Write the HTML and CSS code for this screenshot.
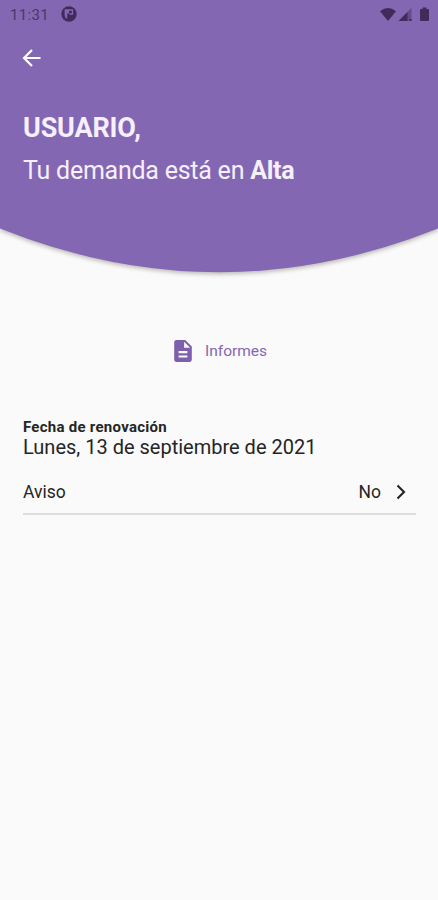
FILE: index.html
```html
<!DOCTYPE html>
<html lang="es">
<head>
<meta charset="utf-8">
<title>Demanda</title>
<link rel="stylesheet" href="styles.css">
</head>
<body>
<header class="hero">
  <svg class="hero-shape" viewBox="0 0 438 282" aria-hidden="true"><path d="M-20-20H458V220L438 228.5Q219 316 0 228.5L-20 220Z" fill="#8467b2"/></svg>
  <div class="status">
    <span class="clock">11:31</span>
    <svg class="app-mark" viewBox="0 0 16 16"><circle cx="8" cy="8" r="7.7" fill="#402b5b"/><path d="M3.600 3.300H8V7.500H6.200V12.500H4.800Q3.600 10 3.600 8Z" fill="#8467b2"/><path d="M8 4H11.500V8H8.500" fill="none" stroke="#8467b2" stroke-width="1.300"/></svg>
    <svg class="signals" viewBox="0 0 50 16"><g fill="#402b5b"><path d="M0 4.3Q8-2.3 16 4.3L8 14Z"/><path d="M31.5 1V14H18.5Z" opacity=".45"/><path d="M27.5 5V14H18.5ZM29.500 12h2v2h-2z"/><path d="M42.5.5h4V2H48q1 0 1 1V13q0 1-1 1H41q-1 0-1-1V3q0-1 1-1h1.500Z"/></g></svg>
  </div>
  <svg class="back" viewBox="0 0 20 20"><path d="M18.500 10H2.500M10 2L2 10L10 18" fill="none" stroke="#fff" stroke-width="2.200"/></svg>
  <h1 class="name">USUARIO,</h1>
  <p class="demand">Tu demanda está en <b>Alta</b></p>
</header>
<main>
  <div class="reports">
    <svg class="doc" viewBox="4 2 16 20"><path d="M14 2H6c-1.100 0-1.990.9-1.990 2L4 20c0 1.100.89 2 1.990 2H18c1.100 0 2-.9 2-2V8l-6-6zm2 16H8v-2h8v2zm0-4H8v-2h8v2zm-3-5V3.500L18.500 9H13z" fill="#7d5fae"/></svg>
    <span>Informes</span>
  </div>
  <section class="details">
    <h2 class="label">Fecha de renovación</h2>
    <p class="date">Lunes, 13 de septiembre de 2021</p>
    <div class="row">
      <span>Aviso</span>
      <span class="value">No</span>
      <svg class="chevron" viewBox="0 0 10 16"><path d="M1.500 1.500L8 8L1.500 14.500" fill="none" stroke="#222" stroke-width="2.100"/></svg>
    </div>
  </section>
</main>
</body>
</html>
```

FILE: styles.css
```css
* { box-sizing: border-box; }
body {
  margin: 0;
  min-height: 900px;
  background: #fafafa;
  color: #252525;
  font-family: Roboto, sans-serif;
}
h1, h2, p { margin: 0; }
svg { display: block; flex: none; }
.hero {
  position: relative;
  height: 282px;
  color: #f6effc;
  overflow: hidden;
}
.hero-shape {
  position: absolute;
  inset: 0;
  z-index: -1;
  width: 438px;
  height: 282px;
  filter: drop-shadow(0 2px 2px rgba(60, 50, 40, .32));
}
.status {
  display: flex;
  align-items: center;
  height: 28px;
  padding: 0 8px 0 10px;
  color: #4d366b;
}
.clock { width: 51px; padding-top: 1px; font-size: 15px; letter-spacing: .35px; }
.app-mark { width: 16px; height: 16px; }
.signals { width: 50px; height: 16px; margin: 1px 0 0 auto; }
.back { width: 20px; height: 20px; margin: 20px 0 0 22px; }
.name {
  margin: 43px 0 0 23px;
  font-size: 27px;
  line-height: 34px;
  font-weight: 700;
  letter-spacing: -.15px;
}
.demand {
  margin: 9px 0 0 23px;
  font-size: 25px;
  line-height: 34px;
  letter-spacing: -.24px;
}
.reports {
  display: flex;
  align-items: center;
  height: 24px;
  margin: 57px 0 0 174px;
  gap: 13px;
  color: #8467b2;
  font-size: 15.500px;
}
.doc { width: 18px; height: 22px; }
.details { margin: 54px 22px 0 23px; }
.label { font-size: 15px; line-height: 20px; font-weight: 700; letter-spacing: .27px; }
.date { font-size: 20px; line-height: 20px; }
.row {
  display: flex;
  align-items: center;
  height: 58px;
  padding: 13px 10px 0 0;
  border-bottom: 2px solid #dedede;
  font-size: 17.500px;
}
.value { margin-left: auto; }
.chevron { width: 10px; height: 16px; margin-left: 15px; }
```
